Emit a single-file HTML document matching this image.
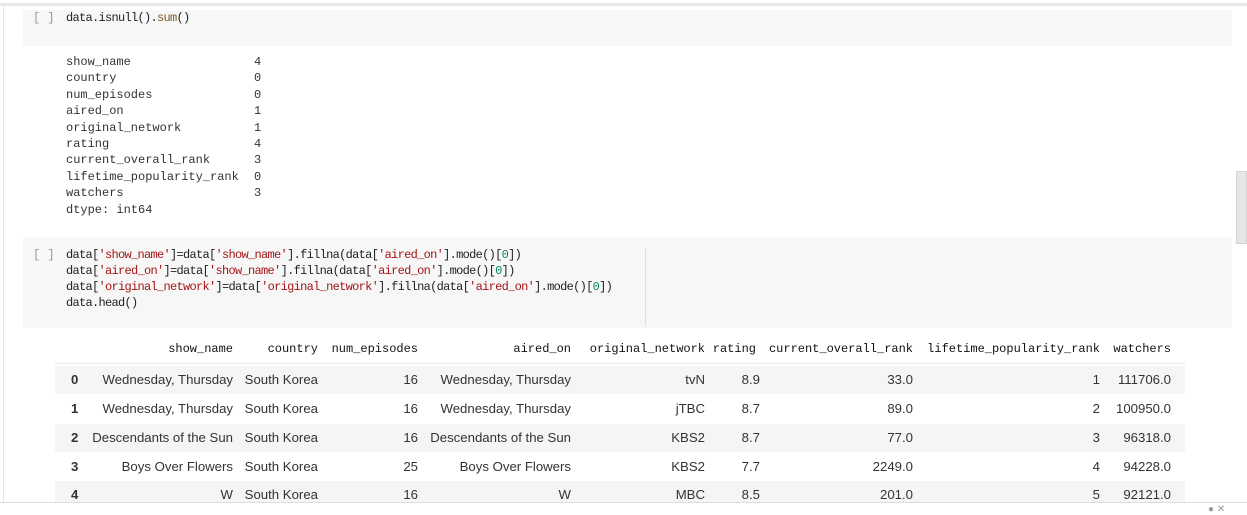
<!DOCTYPE html>
<html><head><meta charset="utf-8"><style>
body{margin:0;width:1247px;height:513px;background:#fff;position:relative;overflow:hidden;font-family:"Liberation Sans",sans-serif}
.a{position:absolute;white-space:pre}
.m{font-family:"Liberation Mono",monospace}
.code{font-size:12px;color:#212121;letter-spacing:-0.7px}
.out{font-size:12px;color:#333;line-height:16.4px}
.s{color:#a31515}.n{color:#098658}.f{color:#795e26}
.h{font-family:"Liberation Mono",monospace;font-size:12px;color:#111}
.d{font-size:13.2px;color:#333}
.br{color:#999;font-size:12px}
</style></head><body>
<div class="a" style="left:0;top:3px;width:1247px;height:3px;background:#e8e8e8"></div>
<div class="a" style="left:3px;top:5px;width:1px;height:497px;background:#e5e5e5"></div>
<div class="a" style="left:23px;top:10px;width:1209px;height:36px;background:#f7f7f7"></div>
<div class="a m br" style="left:33px;top:10px;line-height:16px">[ ]</div>
<div class="a m code" style="left:66px;top:10px;line-height:16px">data.isnull().<span class="f">sum</span>()</div>
<div class="a m out" style="left:66px;top:54px">show_name
country
num_episodes
aired_on
original_network
rating
current_overall_rank
lifetime_popularity_rank
watchers
dtype: int64</div>
<div class="a m out" style="left:254px;top:54px">4
0
0
1
1
4
3
0
3</div>
<div class="a" style="left:1236px;top:171px;width:11px;height:73px;background:#e6e6e6;border:1px solid #d5d5d5;box-sizing:border-box"></div>
<div class="a" style="left:23px;top:237px;width:1209px;height:91px;background:#f7f7f7"></div>
<div class="a" style="left:645px;top:248px;width:1px;height:78px;background:#e0e0e0"></div>
<div class="a m br" style="left:33px;top:247px;line-height:16px">[ ]</div>
<div class="a m code" style="left:66px;top:247px;line-height:16px">data[<span class="s">'show_name'</span>]=data[<span class="s">'show_name'</span>].fillna(data[<span class="s">'aired_on'</span>].mode()[<span class="n">0</span>])
data[<span class="s">'aired_on'</span>]=data[<span class="s">'show_name'</span>].fillna(data[<span class="s">'aired_on'</span>].mode()[<span class="n">0</span>])
data[<span class="s">'original_network'</span>]=data[<span class="s">'original_network'</span>].fillna(data[<span class="s">'aired_on'</span>].mode()[<span class="n">0</span>])
data.head()</div>
<div class="a" style="left:55px;top:363px;width:1130px;height:1px;background:#e6e6e6"></div>
<div class="a" style="left:55px;top:366px;width:1130px;height:28px;background:#f5f5f5"></div>
<div class="a" style="left:55px;top:424px;width:1130px;height:28px;background:#f5f5f5"></div>
<div class="a" style="left:55px;top:481px;width:1130px;height:21px;background:#f5f5f5"></div>
<div id="t"></div>
<div class="a" style="left:0;top:502px;width:1247px;height:1px;background:#ddd"></div>
<div class="a" style="left:1208px;top:504px;font-size:10px;color:#999">● ✕</div>
<script>
var R=[233,318,418,571,705,756,913,1100,1171];
var H=["show_name","country","num_episodes","aired_on","original_network","rating","current_overall_rank","lifetime_popularity_rank","watchers"];
var D=[["Wednesday, Thursday","South Korea","16","Wednesday, Thursday","tvN","8.9","33.0","1","111706.0"],
["Wednesday, Thursday","South Korea","16","Wednesday, Thursday","jTBC","8.7","89.0","2","100950.0"],
["Descendants of the Sun","South Korea","16","Descendants of the Sun","KBS2","8.7","77.0","3","96318.0"],
["Boys Over Flowers","South Korea","25","Boys Over Flowers","KBS2","7.7","2249.0","4","94228.0"],
["W","South Korea","16","W","MBC","8.5","201.0","5","92121.0"]];
var Y=[380,409,438,467,495],h="";
H.forEach(function(t,i){h+='<div class="a h" style="right:'+(1247-R[i])+'px;top:341px;line-height:16px">'+t+'</div>';});
D.forEach(function(r,j){
h+='<div class="a d" style="left:71px;top:'+(Y[j]-8)+'px;line-height:16px;font-weight:bold">'+j+'</div>';
r.forEach(function(t,i){var rr=R[i];if(i==5)rr=760;h+='<div class="a d" style="right:'+(1247-rr)+'px;top:'+(Y[j]-8)+'px;line-height:16px">'+t+'</div>';});});
document.getElementById("t").innerHTML=h;
</script>
</body></html>
